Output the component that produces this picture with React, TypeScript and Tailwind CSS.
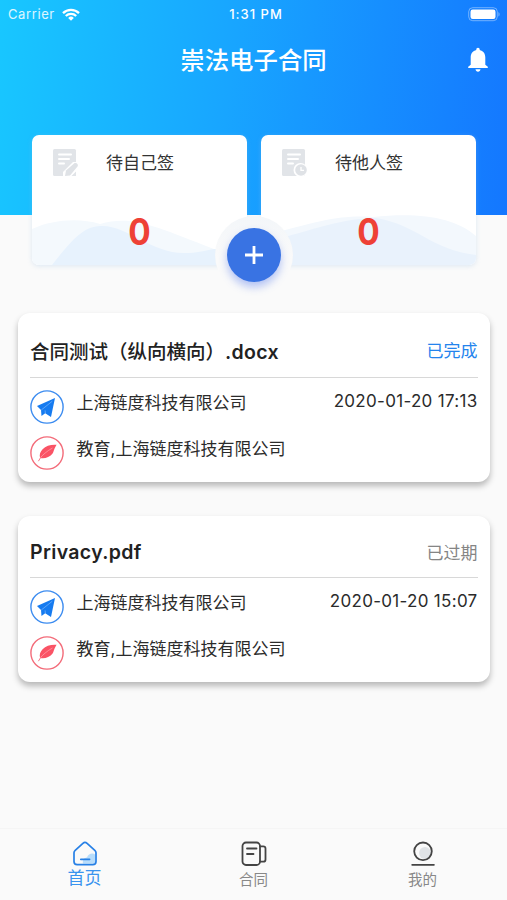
import React from 'react';

interface Contract {
    id: number;
    title: string;
    extension: string;
    status: string;
    expired: boolean;
    date: string;
    sender: string;
    signers: string;
}

const contracts: Contract[] = [
    {
        id: 1,
        title: '合同测试（纵向横向）',
        extension: '.docx',
        status: '已完成',
        expired: false,
        date: '2020-01-20 17:13',
        sender: '上海链度科技有限公司',
        signers: '教育,上海链度科技有限公司',
    },
    {
        id: 2,
        title: '',
        extension: 'Privacy.pdf',
        status: '已过期',
        expired: true,
        date: '2020-01-20 15:07',
        sender: '上海链度科技有限公司',
        signers: '教育,上海链度科技有限公司',
    },
];

const StatusBar = () => (
    <div className="grid h-7 grid-cols-3 items-center pl-2 pr-[7px] text-[13px] leading-7 text-white">
        <div className="flex items-center gap-[7px]">
            <span className="tracking-[0.6px] text-white/85">Carrier</span>
            <svg width="18" height="13" viewBox="0 0 18 13" fill="none" stroke="white" strokeWidth="2.3">
                <path d="M1 5.1a11.4 11.4 0 0 1 16 0" />
                <path d="M3.8 8a7.4 7.4 0 0 1 10.4 0" />
                <path d="M9 12.8 6.2 9.9a4 4 0 0 1 5.6 0z" fill="white" stroke="none" />
            </svg>
        </div>
        <span className="pl-1 text-center font-medium tracking-[1px]">1:31 PM</span>
        <svg className="justify-self-end" width="32" height="15" viewBox="0 0 32 15">
            <rect x=".7" y=".7" width="28.6" height="13" rx="4" fill="none" stroke="white" strokeOpacity=".4" />
            <rect x="2.5" y="2.5" width="25" height="9.4" rx="2.2" fill="white" />
            <path d="M30.5 5v4.6c1.4-.7 1.4-3.9 0-4.6z" fill="white" fillOpacity=".5" />
        </svg>
    </div>
);

const BellIcon = () => (
    <svg width="22" height="26" viewBox="0 0 22 26" fill="white">
        <path d="M11 .8c1 0 1.7.7 1.7 1.7v.6c3.5.8 5.6 3.7 5.6 7.3v7.4l2.5 2v1.3H1.2v-1.3l2.5-2v-7.4c0-3.6 2.1-6.5 5.6-7.3v-.6C9.3 1.5 10 .8 11 .8z" />
        <path d="M8.5 22.3h5c-.2 1.5-1.2 2.4-2.5 2.4s-2.3-.9-2.5-2.4z" />
    </svg>
);

const PendingIcon = ({ mine }: { mine: boolean }) => (
    <svg width="26" height="28" viewBox="0 0 26 28">
        <rect x="0" y="0" width="23" height="27" rx="1.5" fill="#e1e4e8" />
        <g stroke="white" strokeWidth="2" strokeLinecap="round">
            <path d="M6 5.5h12" />
            <path d="M6 10h10" />
            <path d="M6 14.5h5" />
        </g>
        {mine ? (
            <g>
                <path d="M10 28v-5l10-10h6v8l-6 7z" fill="white" />
                <path d="m12 27 1-5.5 8-7c1.9-1.5 5 .9 3.5 3L17 26.5z" fill="#dfe2e6" />
                <path d="M18.5 27l4.5-4.5V27z" fill="#e1e4e8" />
            </g>
        ) : (
            <g>
                <circle cx="18.5" cy="21" r="7" fill="white" />
                <circle cx="19" cy="21" r="5.8" fill="#dfe2e6" />
                <path d="M19 18v3.3h3" fill="none" stroke="white" strokeWidth="1.3" />
            </g>
        )}
    </svg>
);

const PendingCard = ({ label, count, mine }: { label: string; count: number; mine: boolean }) => (
    <div className="relative h-[130px] w-[215px] overflow-hidden rounded-[7px] bg-white">
        <svg className="absolute bottom-0 left-0" width="215" height="50" viewBox="0 0 215 50">
            {mine ? (
                <>
                    <path d="M0 14C22 4 48 3 68 9 100 0 120 10 182 34h33v16H0z" fill="#f4f9fd" />
                    <path d="M20 50C42 22 52 12 68 11c26-2 50 27 84 27 14 0 18-2 30-4h33v16z" fill="#e7f2fd" />
                </>
            ) : (
                <>
                    <path d="M0 22C60 5 80 0 112 2c48-5 82 1 103 19v29H0z" fill="#f3f8fd" />
                    <path d="M0 29C60 12 80 4 115 3c42 7 55 32 100 37v10H0z" fill="#e9f2fc" />
                </>
            )}
        </svg>
        <div className="relative flex items-start pl-[21px] pt-[14px]">
            <PendingIcon mine={mine} />
            <span className="ml-[27px] mt-px text-[17px] leading-[26px] text-[#333]">{label}</span>
        </div>
        <div className="relative mt-[33px] text-center text-[37px] font-bold leading-[44px] text-[#ee4136]">
            <span className="inline-block scale-x-[0.9]">{count}</span>
        </div>
    </div>
);

const PlaneBadge = () => (
    <svg width="34" height="34" viewBox="0 0 34 34">
        <circle cx="17" cy="17" r="16.1" fill="white" stroke="#3c8cf0" strokeWidth="1.4" />
        <path d="M25 8 7 15.9l4 4.2.5 5.9 3.7-2.8 5.8 3.8z" fill="#167bf0" />
        <path d="M22.3 11.2 11.3 20" fill="none" stroke="#a6cffc" strokeWidth=".5" />
        <path d="m15.3 23-.2-2.6" fill="none" stroke="#a6cffc" strokeWidth=".5" />
    </svg>
);

const FeatherBadge = () => (
    <svg width="34" height="34" viewBox="0 0 34 34">
        <circle cx="17" cy="17" r="16.1" fill="white" stroke="#f36b79" strokeWidth="1.4" />
        <path d="M26.6 8.7c-5.6-.4-10.6.8-14 4.6-2.3 2.6-3.5 5.3-2.5 8.6 4.6.9 9.2-.4 12.3-4.2 1.1-1.4 1-2.4 1.8-4.2.7-1.7 1.300-3 2.400-4.800z" fill="#fa5365" />
        <path d="M22.5 12C17 15 12.5 19 10 22.2" fill="none" stroke="#ffb3bc" strokeWidth=".6" />
        <path d="M11 21 8.4 25.2" fill="none" stroke="#fa7a88" strokeWidth="1" />
    </svg>
);

const ContractCard = ({ contract }: { contract: Contract }) => (
    <div className="rounded-xl bg-white pb-3 pl-3 pr-[12.5px] shadow-[0_4px_6px_rgba(0,0,0,0.27)]">
        <div
            className={`flex justify-between border-b border-[#d8d8d8] ${contract.expired ? 'h-[62px] pt-[23px]' : 'h-[65px] pt-[26px]'}`}
        >
            <h2 className="text-[19.5px] font-semibold leading-[26px] text-[#222]">
                <span className="font-medium">{contract.title}</span>
                <span className="tracking-[0.35px]">{contract.extension}</span>
            </h2>
            <span
                className={`text-[17px] leading-[26px] ${contract.expired ? 'mt-px text-[#858585]' : '-mt-px text-[#2484ed]'}`}
            >
                {contract.status}
            </span>
        </div>
        <div className="mt-3 flex">
            <PlaneBadge />
            <span className="ml-[12.5px] text-[17px] leading-[26px] text-[#2b2b2b]">{contract.sender}</span>
            <span className="-mt-0.5 ml-auto text-[17px] leading-[26px] tracking-[0.3px] text-[#2b2b2b]">{contract.date}</span>
        </div>
        <div className="mt-3 flex">
            <FeatherBadge />
            <span className="ml-[12.5px] text-[17px] leading-[26px] text-[#2b2b2b]">{contract.signers}</span>
        </div>
    </div>
);

const HomeIcon = () => (
    <svg width="26" height="26" viewBox="0 0 26 26" fill="none">
        <path d="M11 22.5c-1-4 2-6 4-6 1-4 6-5 8-3v7c0 1.5-1 2-2 2z" fill="#b8ddfb" />
        <path
            d="M2 11.8c0-1 .4-1.700 1.200-2.400l7.700-7c1.300-1.200 2.900-1.200 4.200 0l7.700 7c.8.700 1.200 1.400 1.200 2.400v8.700c0 2-1.100 3.200-3.200 3.200H5.200C3.100 23.700 2 22.500 2 20.500z"
            stroke="#2780e6"
            strokeWidth="1.7"
        />
        <path d="M8.8 18.3h8.8" stroke="#2780e6" strokeWidth="1.7" strokeLinecap="round" />
    </svg>
);

const ContractIcon = () => (
    <svg width="26" height="26" viewBox="0 0 26 26" fill="none" stroke="#444" strokeWidth="1.8" strokeLinecap="round">
        <rect x="1.5" y="1.5" width="17.5" height="22.5" rx="3.5" />
        <path d="M19 5.3h3.2c1.4 0 2.3.9 2.3 2.3v10.8c0 1.4-.9 2.3-2.3 2.3H19" />
        <path d="M6 7.5h9.5M6 13h6.5" />
    </svg>
);

const ProfileIcon = () => (
    <svg width="26" height="26" viewBox="0 0 26 26" fill="none" stroke="#444" strokeWidth="1.8" strokeLinecap="round">
        <circle cx="15" cy="12" r="6" fill="#e0e3e6" stroke="none" />
        <circle cx="13" cy="10.3" r="8.8" />
        <path d="M2.2 23.8h21.7" />
    </svg>
);

const TabBar = () => (
    <nav className="mt-auto grid h-[72px] grid-cols-3 border-t border-[#f5f5f5] bg-[#fafafa] pt-3">
        <div className="flex flex-col items-center">
            <HomeIcon />
            <span className="-mt-px text-[17px] leading-6 text-[#3a94ee]">首页</span>
        </div>
        <div className="flex flex-col items-center">
            <ContractIcon />
            <span className="mt-px text-[14.5px] leading-6 text-[#888]">合同</span>
        </div>
        <div className="flex flex-col items-center">
            <ProfileIcon />
            <span className="mt-px text-[14.5px] leading-6 text-[#888]">我的</span>
        </div>
    </nav>
);

export default function App() {
    return (
        <div className="flex h-[900px] w-[507px] flex-col overflow-hidden bg-[#fafafa] font-['Inter','Noto_Sans_CJK_SC',sans-serif]">
            <header className="h-[215px] shrink-0 bg-[linear-gradient(97deg,#18c7ff_0%,#18a5ff_45%,#1477ff_100%)]">
                <StatusBar />
                <div className="grid h-16 grid-cols-[1fr_auto_1fr] items-center">
                    <h1 className="col-start-2 text-[24.4px] font-medium leading-8 text-white">崇法电子合同</h1>
                    <div className="justify-self-end pr-[18px]">
                        <BellIcon />
                    </div>
                </div>
            </header>

            {/* Pending counters, half over the header */}
            <section className="relative -mt-20 flex gap-[14px] px-8">
                <div className="rounded-[7px] shadow-[0_1px_5px_rgba(150,190,225,0.3)]">
                    <PendingCard label="待自己签" count={0} mine />
                </div>
                <div className="rounded-[7px] shadow-[0_1px_5px_rgba(150,190,225,0.3)]">
                    <PendingCard label="待他人签" count={0} mine={false} />
                </div>
                {/* Round notch with the add button */}
                <div className="absolute left-[215px] top-[81px] flex h-[78px] w-[78px] items-center justify-center rounded-full bg-[#fafafa] bg-[linear-gradient(180deg,#f3f6f9_0%,#fafafa_55%)]">
                    <button className="flex h-[54px] w-[54px] items-center justify-center rounded-full bg-[#3973e3] shadow-[0_5px_9px_rgba(70,110,235,0.4)]">
                        <svg width="20" height="20" viewBox="0 0 20 20" stroke="white" strokeWidth="2.8">
                            <path d="M10 1v18M1 10h18" />
                        </svg>
                    </button>
                </div>
            </section>

            <main className="mt-12 flex flex-col gap-[34px] pl-[18px] pr-[17px]">
                {contracts.map((contract) => (
                    <ContractCard key={contract.id} contract={contract} />
                ))}
            </main>

            <TabBar />
        </div>
    );
}
